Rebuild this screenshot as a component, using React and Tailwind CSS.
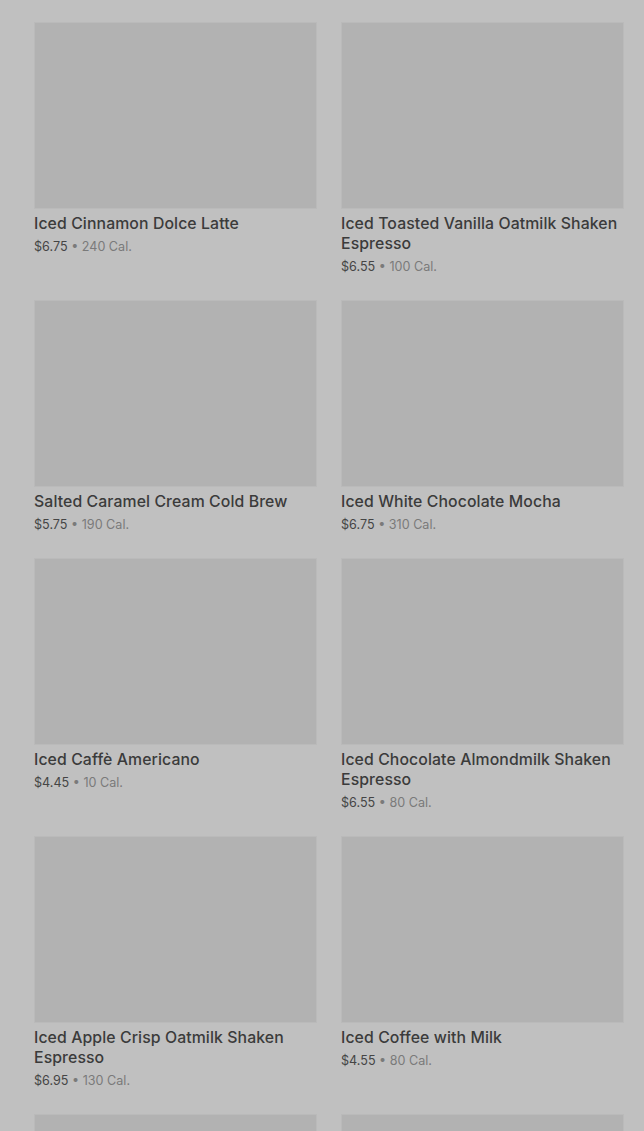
const drinks = [
  { name: "Iced Cinnamon Dolce Latte", price: "$6.75", cal: "240 Cal." },
  { name: "Iced Toasted Vanilla Oatmilk Shaken Espresso", price: "$6.55", cal: "100 Cal." },
  { name: "Salted Caramel Cream Cold Brew", price: "$5.75", cal: "190 Cal." },
  { name: "Iced White Chocolate Mocha", price: "$6.75", cal: "310 Cal." },
  { name: "Iced Caffè Americano", price: "$4.45", cal: "10 Cal." },
  { name: "Iced Chocolate Almondmilk Shaken Espresso", price: "$6.55", cal: "80 Cal." },
  { name: "Iced Apple Crisp Oatmilk Shaken Espresso", price: "$6.95", cal: "130 Cal." },
  { name: "Iced Coffee with Milk", price: "$4.55", cal: "80 Cal." },
  { name: "Iced Brown Sugar Oatmilk Shaken Espresso", price: "$6.55", cal: "120 Cal." },
  { name: "Iced Caramel Macchiato", price: "$6.25", cal: "250 Cal." },
];

export default function App() {
  return (
    <div className="w-[644px] h-[1131px] overflow-hidden bg-[#c0c0c0] font-['Inter',sans-serif]">
      <div className="grid grid-cols-2 gap-x-6 gap-y-6 items-start pl-[34px] pr-5 pt-[22px]">
        {drinks.map((d, i) => (
          <div key={i} className="flex flex-col">
            <div className="h-[187px] bg-[#b2b2b2] border border-[#bababa]" />
            <p className="mt-[5px] text-[15.8px] leading-5 font-medium text-[#3b3b3b] tracking-[0.1px]">
              {d.name}
            </p>
            <p className="mt-[3px] text-[12.6px] leading-[19px] text-[#454545]">
              {d.price} <span className="text-[#7a7a7a]">•</span>{" "}
              <span className="text-[#7a7a7a]">{d.cal}</span>
            </p>
          </div>
        ))}
      </div>
    </div>
  );
}
